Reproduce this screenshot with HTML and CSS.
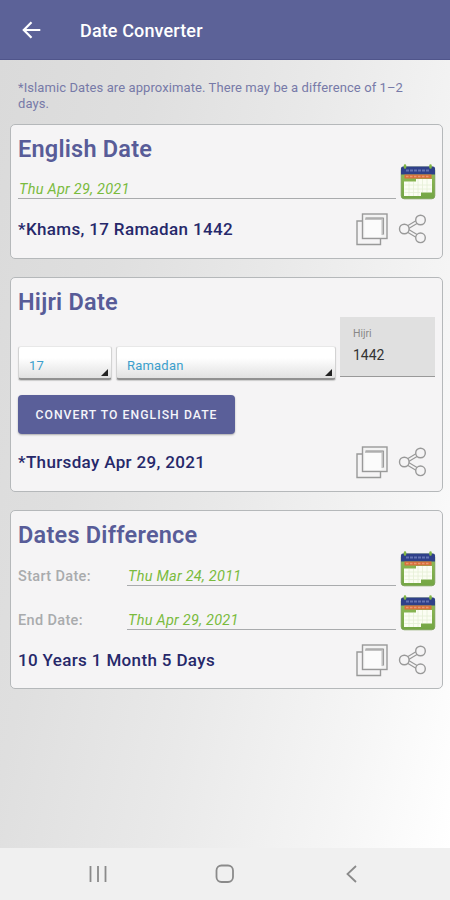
FILE: index.html
```html
<!DOCTYPE html>
<html lang="en">
<head>
<meta charset="utf-8">
<meta name="viewport" content="width=device-width, initial-scale=1">
<title>Date Converter</title>
<link rel="stylesheet" href="styles.css">
</head>
<body>
<svg class="defs" width="0" height="0" aria-hidden="true">
  <defs>
    <linearGradient id="leaf" x1="0" y1="0" x2="0" y2="1">
      <stop offset="0" stop-color="#93bd58"/><stop offset="1" stop-color="#73a544"/>
    </linearGradient>
  </defs>
  <symbol id="calendar" viewBox="0 0 36 36">
    <rect x="1.200" y="3" width="33.600" height="31.800" rx="3" fill="url(#leaf)" stroke="#769c50" stroke-width=".8"/>
    <path d="M1 10.500V4.500Q1 2.500 3 2.500H33Q35 2.500 35 4.500V10.500Z" fill="#2f4089"/>
    <path d="M6 6.500H30" stroke="#6573b3" stroke-width="1.800" stroke-dasharray="3 1"/>
    <path d="M5 1.500V3.500M30.500 1.500V3.500" stroke="#80b544" stroke-width="2.500" stroke-linecap="round"/>
    <rect x="4.500" y="10.500" width="27" height="4" fill="#d96f3c"/>
    <path d="M6 12.500H30" stroke="#e89b70" stroke-width="1.500" stroke-dasharray="2.500 1.500"/>
    <path d="M16 15H32V28.500H21V32H4V17.500H16Z" fill="#fbfdf3"/>
    <path d="M4.500 21H31.500M4.500 25H31.500M4.500 28.500H20M9 18V32M13.500 18V32M18 15V32M22.500 15V28M27 15V28" stroke="#e6efd5" stroke-width=".8"/>
  </symbol>
  <symbol id="copy" viewBox="0 0 34 34">
    <path d="M7.500 9H2V32.500H25.500V27" fill="none" stroke="#999" stroke-width="1.400"/>
    <rect x="7.500" y="2" width="24.500" height="24.500" fill="#f3f3f3" stroke="#999" stroke-width="1.400"/>
    <rect x="9.500" y="8" width="17" height="17" fill="#fbfbfb"/>
    <path d="M10 6.700H27.800V23" fill="none" stroke="#c2c2c2" stroke-width="2.600"/>
    <path d="M11 6H28.500V22" fill="none" stroke="#929292" stroke-width=".8"/>
  </symbol>
  <symbol id="share" viewBox="0 0 30 30">
    <path d="M7 15L22 6M7 15L22 24" stroke="#999" stroke-width="4.200"/>
    <path d="M7 15L22 6M7 15L22 24" stroke="#f5f4f5" stroke-width="1.800"/>
    <g fill="#f5f4f5" stroke="#999" stroke-width="1.400">
      <circle cx="6.300" cy="15" r="4.800"/><circle cx="22.500" cy="6" r="4.800"/><circle cx="22.500" cy="23.800" r="4.800"/>
    </g>
  </symbol>
</svg>
<header class="appbar">
  <svg class="back" viewBox="0 0 20 20"><path d="M18.300 10H2M9.500 2.300L1.800 10L9.500 17.700" fill="none" stroke="#fff" stroke-width="2.200"/></svg>
  <h1>Date Converter</h1>
</header>
<main>
  <p class="note">*Islamic Dates are approximate. There may be a difference of 1–2 days.</p>

  <section class="card english">
    <h2>English Date</h2>
    <div class="date-row">
      <div class="field">Thu Apr 29, 2021</div>
      <svg class="calendar"><use href="#calendar"/></svg>
    </div>
    <div class="result">
      <strong>*Khams, 17 Ramadan 1442</strong>
      <svg class="copy"><use href="#copy"/></svg>
      <svg class="share"><use href="#share"/></svg>
    </div>
  </section>

  <section class="card hijri">
    <h2>Hijri Date</h2>
    <div class="pickers">
      <div class="spinner day">17</div>
      <div class="spinner month">Ramadan</div>
      <div class="year"><small>Hijri</small><span>1442</span></div>
    </div>
    <button class="convert">CONVERT TO ENGLISH DATE</button>
    <div class="result">
      <strong>*Thursday Apr 29, 2021</strong>
      <svg class="copy"><use href="#copy"/></svg>
      <svg class="share"><use href="#share"/></svg>
    </div>
  </section>

  <section class="card difference">
    <h2>Dates Difference</h2>
    <div class="date-row">
      <label>Start Date:</label>
      <div class="field">Thu Mar 24, 2011</div>
      <svg class="calendar"><use href="#calendar"/></svg>
    </div>
    <div class="date-row">
      <label>End Date:</label>
      <div class="field">Thu Apr 29, 2021</div>
      <svg class="calendar"><use href="#calendar"/></svg>
    </div>
    <div class="result">
      <strong>10 Years 1 Month 5 Days</strong>
      <svg class="copy"><use href="#copy"/></svg>
      <svg class="share"><use href="#share"/></svg>
    </div>
  </section>
</main>
<nav class="navbar">
  <svg viewBox="0 0 20 20"><path d="M2.500 2V18M10 2V18M17.500 2V18"/></svg>
  <svg viewBox="0 0 20 20"><rect x="1.500" y="1.500" width="16.500" height="16.500" rx="5"/></svg>
  <svg viewBox="0 0 20 20"><path d="M14 2L5.500 10L14 18"/></svg>
</nav>
</body>
</html>
```
FILE: styles.css
```css
* { box-sizing: border-box; }
body {
  margin: 0;
  height: 900px;
  display: flex;
  flex-direction: column;
  font-family: Roboto, "Liberation Sans", sans-serif;
  color: #26286a;
  overflow: hidden;
}
.defs { position: absolute; }
h1, h2, p { margin: 0; }
svg { flex: none; }
.appbar {
  height: 60px;
  flex: none;
  display: flex;
  align-items: center;
  padding-left: 22px;
  gap: 38px;
  background: #5c6298;
  border-bottom: 1px solid #50558b;
}
.back { width: 20px; height: 20px; }
h1 { padding-top: 1px; font-size: 18px; font-weight: 500; color: #fff; letter-spacing: .13px; }
main {
  flex: 1;
  padding: 20px 7px 0 10px;
  background: linear-gradient(102deg, #dadada 0%, #dfdfdf 25%, #e9e9e9 52%, #f5f5f5 80%, #fff 100%);
}
.note {
  height: 44px;
  padding: 0 30px 0 8px;
  font-size: 13px;
  line-height: 15.500px;
  letter-spacing: .09px;
  color: #777aa8;
}
.card {
  background: #f5f4f5;
  border: 1.500px solid #b5b8ba;
  border-radius: 5px;
  padding: 0 7px;
  margin-bottom: 18px;
}
.english { height: 135px; }
.hijri { height: 215px; }
.difference { height: 179px; }
h2 {
  padding-top: 10px;
  height: 39px;
  line-height: 29px;
  font-size: 23.500px;
  font-weight: 600;
  letter-spacing: .23px;
  color: #585c98;
}
.difference h2 { height: 40px; }
.date-row { display: flex; height: 36px; }
.difference .date-row { height: 44px; }
.field {
  flex: 1;
  height: 35px;
  padding: 17px 1px 0;
  border-bottom: 1px solid #a9abad;
  font-size: 14.500px;
  line-height: 18px;
  letter-spacing: .25px;
  font-style: italic;
  color: #7abb3d;
}
.calendar { width: 36px; height: 36px; margin: 0 -1px 0 4px; }
label {
  width: 109px;
  padding-top: 17px;
  font-size: 14.500px;
  line-height: 18px;
  letter-spacing: .35px;
  font-weight: 500;
  color: #a9abad;
}
.result { display: flex; align-items: center; height: 58px; }
.hijri .result { height: 56px; }
.difference .result { height: 42px; }
strong { flex: 1; font-size: 17px; font-weight: 500; letter-spacing: .35px; }
.copy { width: 34px; height: 34px; margin-right: 9px; }
.share { width: 30px; height: 30px; margin-right: 7px; }
.pickers { display: flex; align-items: flex-end; height: 60px; gap: 4px; }
.spinner {
  position: relative;
  height: 34px;
  margin-bottom: -3px;
  border: 1px solid #d3d3d3;
  border-top-color: #e8e8e8;
  border-bottom: 2px solid #919191;
  border-radius: 3px;
  padding: 0 10px;
  line-height: 37px;
  font-size: 13px;
  letter-spacing: .2px;
  color: #3b9fcc;
  background: linear-gradient(#fff 35%, #e1e1e1);
  box-shadow: 0 1px 1px #ccc;
}
.spinner::after {
  content: "";
  position: absolute;
  right: 3px;
  bottom: 2px;
  border-left: 7px solid transparent;
  border-bottom: 7px solid #222;
}
.day { width: 94px; }
.month { width: 220px; }
.year {
  flex: 1;
  height: 60px;
  padding: 10px 13px;
  background: #e0e0e0;
  border-bottom: 1.500px solid #999;
  color: #333;
}
.year small, .year span { display: block; }
.year small { font-size: 10.500px; line-height: 13px; color: #888; }
.year span { font-size: 14px; line-height: 18px; margin-top: 6px; }
.convert {
  display: block;
  width: 217px;
  height: 39px;
  margin-top: 18px;
  padding: 0;
  border: 0;
  border-radius: 4px;
  background: #5a5f99;
  box-shadow: 0 1px 2px #aaa;
  color: #f4f4fa;
  font: 500 12.200px Roboto, sans-serif;
  letter-spacing: 1.050px;
}
.navbar {
  height: 52px;
  flex: none;
  display: flex;
  justify-content: space-between;
  padding: 16px 88px 0;
  background: #f0f0f0;
}
.navbar svg { width: 20px; height: 20px; fill: none; stroke: #8a8a8a; stroke-width: 1.800; }
```
